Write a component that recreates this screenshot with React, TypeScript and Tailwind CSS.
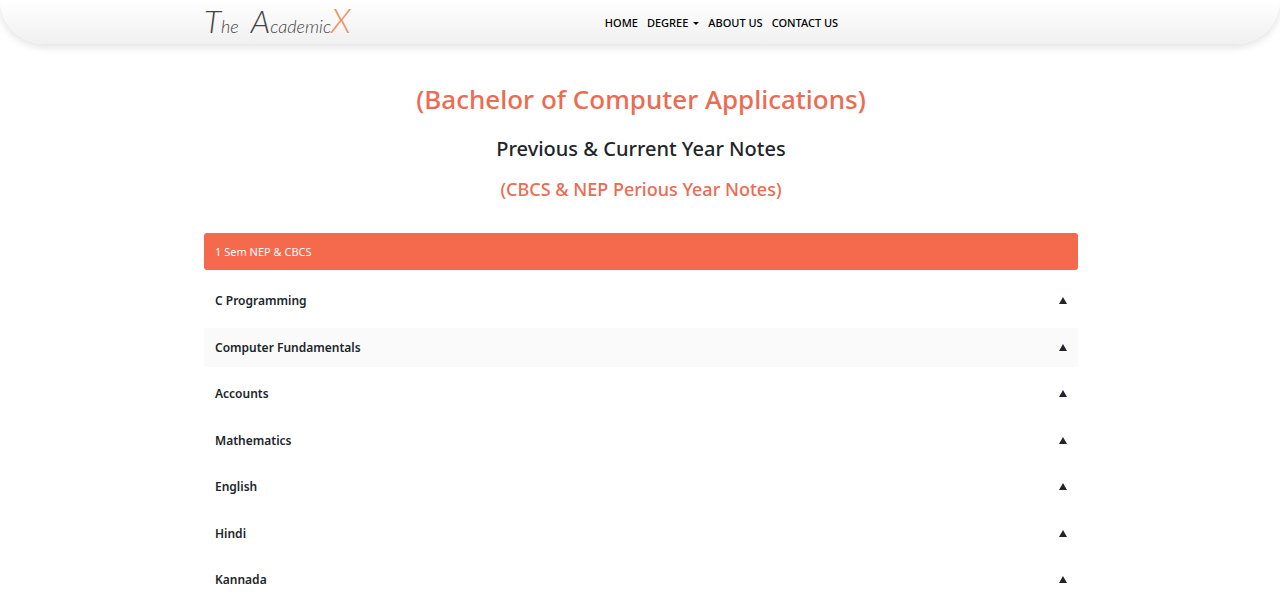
const subjects = [
  'C Programming',
  'Computer Fundamentals',
  'Accounts',
  'Mathematics',
  'English',
  'Hindi',
  'Kannada',
];

function Logo() {
  return (
    <a
      href="#home"
      aria-label="The AcademicX"
      className="flex items-baseline font-['Lato',sans-serif] text-[18px] leading-[40px] font-light text-[#444] italic"
    >
      <span className="text-[32px]">T</span>
      <span>he</span>
      <span className="ml-3 text-[32px]">A</span>
      <span>cademic</span>
      <span className="text-[34px] text-[#f0905f]">X</span>
    </a>
  );
}

function Header() {
  return (
    <header className="rounded-b-[44px] bg-linear-to-b from-white to-[#f0f0f0] shadow-[0_3px_8px_rgba(0,0,0,0.12)]">
      <div className="mx-auto grid h-11 max-w-[876px] grid-cols-[1fr_auto_1fr] items-center pl-[2px]">
        <Logo />
        <nav className="ml-[161px] flex items-center gap-[9px] text-[11px] leading-[16px] font-medium text-black">
          <a href="#home">HOME</a>
          <button type="button" className="flex items-center gap-[5px]">
            DEGREE
            <svg viewBox="0 0 6 3" className="h-[3px] w-[6px]" aria-hidden="true">
              <path d="M0 0h6L3 3z" fill="currentColor" />
            </svg>
          </button>
          <a href="#about">ABOUT US</a>
          <a href="#contact">CONTACT US</a>
        </nav>
      </div>
    </header>
  );
}

export default function App() {
  return (
    <div className="bg-white font-['Noto_Sans',sans-serif] text-[#212529]">
      <Header />
      <main className="mx-auto max-w-[876px] pb-3 pl-[2px]">
        <div className="pt-[38px] text-center font-medium">
          <h1 className="text-[26px] leading-[34px] text-[#ec6b52]">(Bachelor of Computer Applications)</h1>
          <h2 className="mt-[20px] text-[20px] leading-[26px]">Previous &amp; Current Year Notes</h2>
          <h3 className="mt-[15px] text-[18px] leading-[24px] text-[#ec6b52]">(CBCS &amp; NEP Perious Year Notes)</h3>
        </div>
        <section className="mt-[32px]">
          <h4 className="rounded-[3px] bg-[#f5694c] px-[11px] py-[10px] text-[11px] leading-[17px] text-white">
            1 Sem NEP &amp; CBCS
          </h4>
          <ul className="mt-[11px] flex flex-col gap-[7px]">
            {subjects.map((name) => (
              <li key={name}>
                <button
                  type="button"
                  className={
                    'flex w-full items-center justify-between rounded-[3px] px-[11px] py-[10px] text-left text-[12px] leading-relaxed font-semibold ' +
                    (name === 'Computer Fundamentals' ? 'bg-[#fafafa]' : 'bg-white')
                  }
                >
                  {name}
                  <svg viewBox="0 0 8 7" className="h-[7px] w-[8px]" aria-hidden="true">
                    <path d="M4 0l4 7H0z" fill="currentColor" />
                  </svg>
                </button>
              </li>
            ))}
          </ul>
        </section>
      </main>
    </div>
  );
}
